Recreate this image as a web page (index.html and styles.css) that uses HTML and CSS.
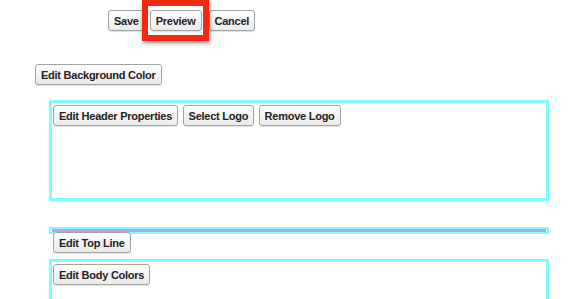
FILE: index.html
```html
<!DOCTYPE html>
<html lang="en">
<head>
    <meta charset="UTF-8">
    <title>Template Editor</title>
    <link rel="stylesheet" href="styles.css">
</head>
<body>
    <div class="actions">
        <button class="btn">Save</button>
        <span class="highlight">
            <button class="btn">Preview</button>
        </span>
        <button class="btn">Cancel</button>
    </div>

    <div class="editor">
        <button class="btn">Edit Background Color</button>

        <div class="sections">
            <div class="box header-box">
                <button class="btn">Edit Header Properties</button>
                <button class="btn">Select Logo</button>
                <button class="btn">Remove Logo</button>
            </div>

            <div class="top-line"><div class="top-line-bar"></div></div>
            <div class="top-line-tools">
                <button class="btn">Edit Top Line</button>
            </div>

            <div class="box body-box">
                <button class="btn">Edit Body Colors</button>
            </div>
        </div>
    </div>
</body>
</html>
```

FILE: styles.css
```css
body {
    margin: 0;
    font-family: 'Liberation Sans', Arial, Helvetica, sans-serif;
    background: #fff;
    color: #222;
    overflow: hidden;
}

.btn {
    font-family: inherit;
    font-size: 11px;
    font-weight: bold;
    letter-spacing: -0.25px;
    color: #222;
    height: 21px;
    padding: 0 5px;
    border: 1px solid #a3a3a3;
    border-radius: 3px;
    background: linear-gradient(#ffffff, #ebebeb);
    box-shadow: 0 1px 1px rgba(0, 0, 0, 0.12);
    cursor: pointer;
}

.actions {
    display: flex;
    gap: 5px;
    padding: 10px 0 0 108px;
}

.highlight {
    position: relative;
    display: inline-block;
    margin-right: 2px;
}

.highlight::after {
    content: "";
    position: absolute;
    left: -8px;
    right: -7px;
    top: -10px;
    bottom: -10px;
    border: 6px solid #f42a10;
    box-shadow: 1px 2px 4px rgba(0, 0, 0, 0.45);
    pointer-events: none;
}

.editor {
    padding: 33px 0 0 35px;
}

.sections {
    width: 500px;
    margin: 15px 0 0 14px;
}

.box {
    border: 3px solid #80fcfc;
    padding: 2px 1px;
}

.header-box {
    height: 91px;
}

.top-line {
    margin-top: 26px;
    border: 2px solid #80fcfc;
    padding: 0 1px;
}

.top-line-bar {
    height: 3px;
    background: #aaa2fc;
}

.top-line-tools {
    margin-top: -2px;
    padding-left: 4px;
}

.body-box {
    margin-top: 6px;
    height: 60px;
}
```
